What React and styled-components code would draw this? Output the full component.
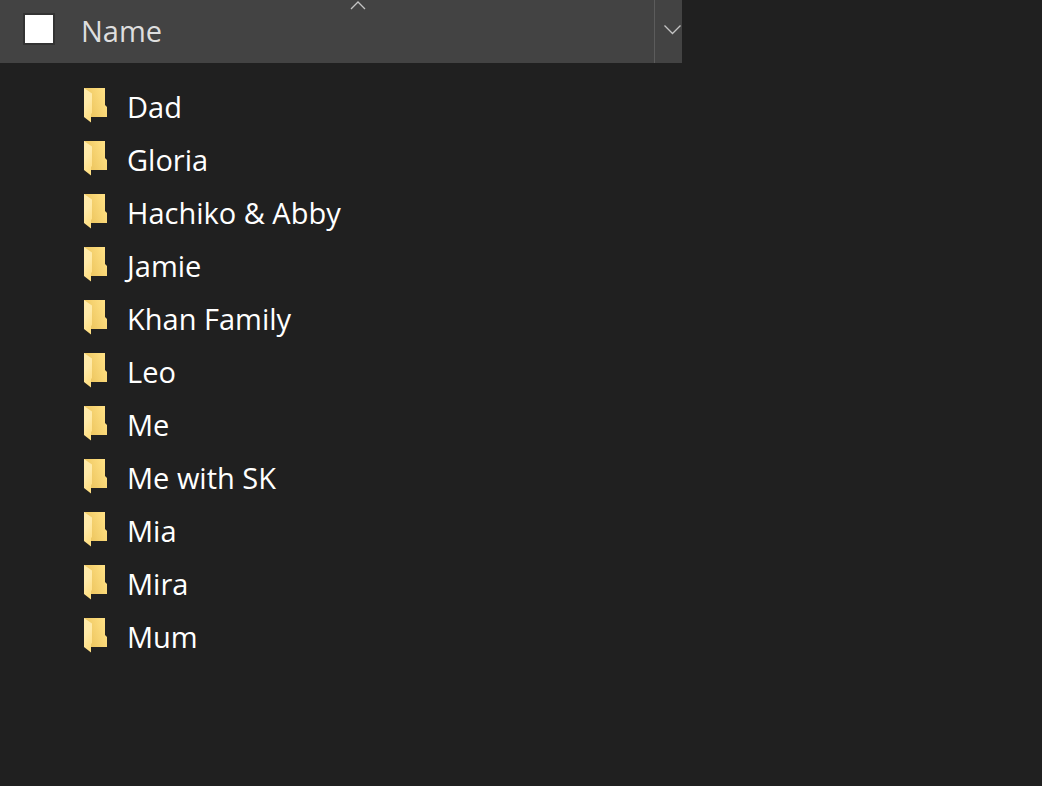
import React, { useState } from "react";
import styled, { createGlobalStyle } from "styled-components";

const GlobalStyle = createGlobalStyle`
  *, *::before, *::after { box-sizing: border-box; }
  body {
    margin: 0;
    min-height: 100vh;
    background: #202020;
    color: #ffffff;
    font-family: "Segoe UI", "Open Sans", "Noto Sans", sans-serif;
    font-size: 29px;
    line-height: 38px;
  }
`;

const Header = styled.header`
  display: flex;
  align-items: stretch;
  width: 65.45%;
  height: 63px;
  background: #434343;
`;

const SelectAll = styled.label`
  display: flex;
  flex: none;
  width: 63px;
  padding: 13px 0 0 23px;
`;

const Checkbox = styled.input`
  appearance: none;
  width: 32px;
  height: 32px;
  margin: 0;
  border: 2px solid #333333;
  background: #ffffff;

  &:checked {
    background: #0078d7;
  }
`;

const HeaderButton = styled.button`
  border: 0;
  padding: 0;
  background: none;
  color: #dedede;
  font: inherit;
  cursor: pointer;
`;

const SortButton = styled(HeaderButton)`
  display: flex;
  flex: 1;
  flex-direction: column;
  align-items: flex-start;
  gap: 2px;
  min-width: 0;
`;

const SortArrow = styled.svg`
  display: block;
  align-self: center;
  width: 16px;
  height: 10px;
  transform: ${({ $descending }) => ($descending ? "scaleY(-1)" : "none")};
`;

const ColumnTitle = styled.span`
  padding-left: 18px;
`;

const FilterButton = styled(HeaderButton)`
  display: flex;
  flex: none;
  align-items: center;
  justify-content: flex-end;
  width: 28px;
  padding-bottom: 4px;
  border-left: 1px solid #5c5c5c;
`;

const FilterArrow = styled.svg`
  display: block;
  width: 18px;
  height: 10px;
`;

const FolderList = styled.ul`
  margin: 0;
  padding: 18px 0 24px 84px;
  list-style: none;
`;

const FolderRow = styled.li`
  display: flex;
  align-items: flex-start;
  gap: 20px;
  height: 53px;
  padding-top: 7px;
`;

const FolderPicture = styled.svg`
  display: block;
  flex: none;
  width: 23px;
  height: 35px;
`;

const FolderName = styled.span`
  white-space: nowrap;
`;

const GradientDefs = styled.svg`
  display: block;
  width: 0;
  height: 0;
`;

const folders = [
  "Dad",
  "Gloria",
  "Hachiko & Abby",
  "Jamie",
  "Khan Family",
  "Leo",
  "Me",
  "Me with SK",
  "Mia",
  "Mira",
  "Mum",
];

function FolderGradients() {
  return (
    <GradientDefs aria-hidden="true">
      <defs>
        <linearGradient id="folder-back" x1="0.3" y1="0.7" x2="1" y2="0.4">
          <stop offset="0" stopColor="#efc964" />
          <stop offset="1" stopColor="#ffe083" />
        </linearGradient>
        <linearGradient id="folder-front" x1="0" y1="0" x2="0.3" y2="1">
          <stop offset="0" stopColor="#ffebab" />
          <stop offset="0.5" stopColor="#ffeaa8" />
          <stop offset="1" stopColor="#ffdf83" />
        </linearGradient>
      </defs>
    </GradientDefs>
  );
}

function FolderIcon() {
  return (
    <FolderPicture viewBox="0 0 23 35" aria-hidden="true">
      <path d="M0 0H21V17L23 19V29H0Z" fill="url(#folder-back)" />
      <path d="M0 0L8 5.5V25L7 26V34.5L0 29Z" fill="url(#folder-front)" />
    </FolderPicture>
  );
}

export default function App() {
  const [descending, setDescending] = useState(false);
  const rows = descending ? [...folders].reverse() : folders;

  return (
    <>
      <GlobalStyle />
      <Header>
        <SelectAll>
          <Checkbox type="checkbox" aria-label="Select all" />
        </SelectAll>
        <SortButton type="button" onClick={() => setDescending(!descending)}>
          <SortArrow viewBox="0 0 16 10" $descending={descending} aria-hidden="true">
            <path d="M1 9L8 2L15 9" fill="none" stroke="#c4c4c4" strokeWidth="1.3" />
          </SortArrow>
          <ColumnTitle>Name</ColumnTitle>
        </SortButton>
        <FilterButton type="button" aria-label="Filter by name">
          <FilterArrow viewBox="0 0 18 10" aria-hidden="true">
            <path d="M0.5 0.5L8.5 8.5L16.5 0.5" fill="none" stroke="#c4c4c4" strokeWidth="1.3" />
          </FilterArrow>
        </FilterButton>
      </Header>
      <main>
        <FolderGradients />
        <FolderList>
          {rows.map((name) => (
            <FolderRow key={name}>
              <FolderIcon />
              <FolderName>{name}</FolderName>
            </FolderRow>
          ))}
        </FolderList>
      </main>
    </>
  );
}
